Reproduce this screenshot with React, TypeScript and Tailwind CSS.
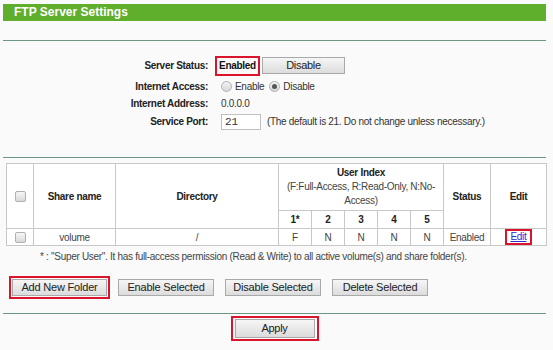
import React from "react";

const Btn = ({ label, w, red }: { label: string; w: string; red?: boolean }) => (
  <div className={red ? "border-2 border-[#d9142b] p-px" : "p-[3px]"}>
    <button
      className={`${w} h-[17px] border border-[#a9a9a9] bg-gradient-to-b from-[#f6f6f6] to-[#dcdcdc] text-[11px] text-[#222] leading-none tracking-[-0.2px]`}
    >
      {label}
    </button>
  </div>
);

const Radio = ({ checked }: { checked?: boolean }) => (
  <span className="inline-flex items-center justify-center w-[11px] h-[11px] rounded-full border border-[#b0b0b0] bg-gradient-to-b from-[#f2f2f2] to-[#d8d8d8]">
    {checked && <span className="w-[5px] h-[5px] rounded-full bg-[#555]" />}
  </span>
);

const Check = () => (
  <span className="inline-block w-[11px] h-[11px] border border-[#b0b0b0] rounded-[2px] bg-gradient-to-b from-[#f6f6f6] to-[#dadada] align-middle" />
);

export default function App() {
  const th = "border border-[#c8c8c8] font-bold text-[#222]";
  const td = "border border-[#c8c8c8] text-center text-[#444] h-[17px]";
  return (
    <div className="w-[553px] h-[350px] bg-[#fafafa] font-['Liberation_Sans',Arial,sans-serif] text-[10px] tracking-[-0.3px] text-[#333] pt-[4px] overflow-hidden">
      {/* title bar */}
      <div className="mx-[3px] w-[543px] h-[17px] bg-[#5fae2c] text-white font-bold text-[12px] tracking-normal leading-[17px] pl-[11px]">
        FTP Server Settings
      </div>
      <div className="mx-[3px] w-[543px] h-px bg-[#6a9684] mt-[19px]" />

      {/* settings */}
      <div className="mt-[14px] flex flex-col gap-[3px]">
        <div className="flex items-center h-[21px]">
          <div className="w-[210px] text-right font-bold text-[#222] pr-[2px]">Server Status:</div>
          <div className="ml-[5px] flex items-center">
            <div className="border-2 border-[#d9142b] w-[45px] h-[20px] flex items-center justify-center font-bold text-[#111]">
              Enabled
            </div>
            <button className="ml-[2px] w-[83px] h-[17px] border border-[#a9a9a9] bg-gradient-to-b from-[#f6f6f6] to-[#dcdcdc] text-[11px] text-[#222] leading-none">
              Disable
            </button>
          </div>
        </div>
        <div className="flex items-center h-[14px]">
          <div className="w-[210px] text-right font-bold text-[#222] pr-[2px]">Internet Access:</div>
          <div className="ml-[11px] flex items-center gap-[3px]">
            <Radio />
            <span>Enable</span>
            <span className="ml-[2px] flex"><Radio checked /></span>
            <span>Disable</span>
          </div>
        </div>
        <div className="flex items-center h-[14px]">
          <div className="w-[210px] text-right font-bold text-[#222] pr-[2px]">Internet Address:</div>
          <div className="ml-[11px]">0.0.0.0</div>
        </div>
        <div className="flex items-center h-[17px]">
          <div className="w-[210px] text-right font-bold text-[#222] pr-[2px]">Service Port:</div>
          <div className="ml-[11px] flex items-center">
            <div className="w-[40px] h-[16px] border border-[#c0c0c0] bg-white font-['Liberation_Mono',monospace] text-[11px] tracking-normal leading-[14px] pl-[3px]">
              21
            </div>
            <span className="ml-[6px]">(The default is 21. Do not change unless necessary.)</span>
          </div>
        </div>
      </div>

      <div className="mx-[3px] w-[543px] h-px bg-[#6a9684] mt-[27px]" />

      {/* table */}
      <table className="mt-[5px] ml-[6px] w-[541px] border-collapse bg-white text-[10px]">
        <tbody>
          <tr>
            <td rowSpan={2} className={`${td} w-[27px]`}>
              <Check />
            </td>
            <td rowSpan={2} className={`${th} w-[82px] text-center`}>Share name</td>
            <td rowSpan={2} className={`${th} w-[163px] text-center`}>Directory</td>
            <td colSpan={5} className={`${th} text-center h-[47px] leading-[14px] px-[2px]`}>
              User Index
              <div className="font-normal text-[#444]">
                (F:Full-Access, R:Read-Only, N:No-
                <br />
                Access)
              </div>
            </td>
            <td rowSpan={2} className={`${th} w-[47px] text-center`}>Status</td>
            <td rowSpan={2} className={`${th} text-center`}>Edit</td>
          </tr>
          <tr>
            <td className={`${th} w-[33px] text-center h-[18px]`}>1*</td>
            <td className={`${th} w-[33px] text-center`}>2</td>
            <td className={`${th} w-[33px] text-center`}>3</td>
            <td className={`${th} w-[33px] text-center`}>4</td>
            <td className={`${th} w-[33px] text-center`}>5</td>
          </tr>
          <tr>
            <td className={td}><Check /></td>
            <td className={td}>volume</td>
            <td className={td}>/</td>
            <td className={td}>F</td>
            <td className={td}>N</td>
            <td className={td}>N</td>
            <td className={td}>N</td>
            <td className={td}>N</td>
            <td className={td}>Enabled</td>
            <td className={td}>
              <span className="inline-block border-2 border-[#d9142b] px-[3px] leading-[12px]">
                <span className="text-[#2a2ad8] underline">Edit</span>
              </span>
            </td>
          </tr>
        </tbody>
      </table>

      <div className="mt-[3px] pl-[40px] text-[#444]">
        * : "Super User". It has full-access permission (Read &amp; Write) to all active volume(s) and share folder(s).
      </div>

      {/* action buttons */}
      <div className="mt-[12px] ml-[9px] flex items-center">
        <Btn label="Add New Folder" w="w-[95px]" red />
        <div className="ml-[5px]"><Btn label="Enable Selected" w="w-[96px]" /></div>
        <div className="ml-[5px]"><Btn label="Disable Selected" w="w-[96px]" /></div>
        <div className="ml-[5px]"><Btn label="Delete Selected" w="w-[96px]" /></div>
      </div>

      <div className="mx-[3px] w-[543px] h-px bg-[#6a9684] mt-[14px]" />

      <div className="mt-[2px] flex justify-center">
        <div className="border-2 border-[#d9142b] w-[88px] h-[25px] flex items-center justify-center ml-[-4px]">
          <button className="w-[80px] h-[19px] border border-[#a9a9a9] bg-gradient-to-b from-[#f6f6f6] to-[#dcdcdc] text-[11px] text-[#222] leading-none">
            Apply
          </button>
        </div>
      </div>
    </div>
  );
}
